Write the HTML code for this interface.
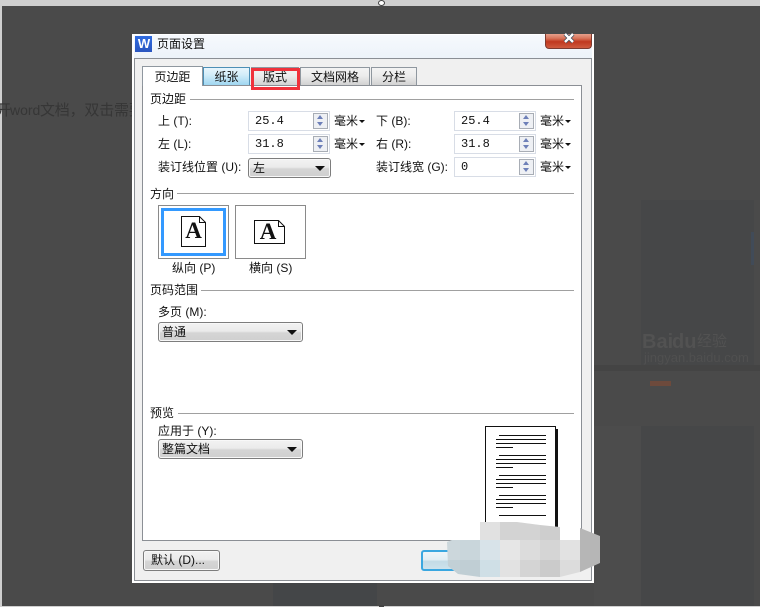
<!DOCTYPE html>
<html><head><meta charset="utf-8">
<style>
html,body{margin:0;padding:0}
body{width:760px;height:607px;overflow:hidden;position:relative;background:#4a4a4a;font-family:"Liberation Sans","WenQuanYi Zen Hei","Noto Sans CJK SC",sans-serif;font-size:12px;color:#111}
div,span{position:absolute;box-sizing:border-box}
.t{white-space:nowrap;line-height:14px;height:14px}
.line{height:1px;background:#a0a0a0}
.tab{top:67px;height:18px;border:1px solid #8f979f;border-bottom:0;text-align:center;line-height:19px;background:linear-gradient(#f4f4f4 0,#ececec 45%,#d2d2d2 100%)}
.in{background:#fff;border:1px solid #d8dde6;height:20px;width:82px;padding:2px 0 0 6px;line-height:15px;font-family:"Liberation Mono",monospace;font-size:12px}
.sp{width:15px;height:16px;right:1px;top:1px;background:#eef0f4;border:1px solid #a8adb5}
.sp:before{content:"";position:absolute;left:3px;top:1px;border:3.5px solid transparent;border-top:0;border-bottom:4px solid #6d7fb8}
.sp:after{content:"";position:absolute;left:3px;top:8px;border:3.5px solid transparent;border-bottom:0;border-top:4px solid #6d7fb8}
.sel{border:1px solid #7d7d7d;border-radius:3px;height:20px;background:linear-gradient(#f2f2f2 0,#ebebeb 45%,#d5d5d5 55%,#cfcfcf 100%);padding:2px 0 0 4px;line-height:15px;box-shadow:inset 0 0 0 1px #f8f8f8}
.arr:after{content:"";position:absolute;right:5px;top:7px;border:5px solid transparent;border-bottom:0;border-top:5px solid #111}
.dn{width:0;height:0;border:3px solid transparent;border-bottom:0;border-top:3px solid #111}
.box{background:#fff;border:1px solid #8a8a8a}
.pl{left:496px;height:1px;width:50px;background:#111}
</style></head>
<body>
<!-- page edges -->
<div style="left:0;top:0;width:760px;height:6px;background:#cfcfcf"></div>
<div style="left:0;top:0;width:2px;height:607px;background:#cfcfcf"></div>
<div style="left:0;top:606px;width:760px;height:1px;background:#d0d0d0"></div>
<div style="left:378px;top:0;width:7px;height:6px;border-radius:50%;background:#fff;border:1px solid #444"></div>
<div style="left:379px;top:605px;width:5px;height:2px;background:#444"></div>
<!-- background doc -->
<div style="left:273px;top:583px;width:104px;height:23px;background:#444648"></div>
<div style="left:641px;top:200px;width:113px;height:165px;background:#464748"></div>
<div style="left:641px;top:426px;width:113px;height:180px;background:#464748"></div>
<div style="left:594px;top:365px;width:166px;height:6px;background:#444"></div>
<div style="left:594px;top:426px;width:47px;height:180px;background:#4c4c4c"></div>
<div style="left:751px;top:232px;width:3px;height:33px;background:#414b58"></div>
<div style="left:642px;top:331px;font-size:20px;line-height:22px;font-weight:bold;color:#525252;white-space:nowrap">Bai</div>
<div style="left:672px;top:331px;font-size:20px;line-height:22px;font-weight:bold;color:#525252;white-space:nowrap">du</div>
<div style="left:697px;top:332px;font-size:15px;line-height:20px;color:#525252;white-space:nowrap">经验</div>
<div style="left:644px;top:350px;font-size:13px;line-height:15px;color:#505050;white-space:nowrap">jingyan.baidu.com</div>
<div style="left:650px;top:381px;width:21px;height:5px;background:#6d4a3c"></div>
<div class="t" style="left:-4px;top:102px;font-size:15px;line-height:17px;height:17px;color:#363636">开</div>
<div class="t" style="left:10px;top:102px;font-size:14px;line-height:17px;height:17px;color:#363636">word</div>
<div class="t" style="left:40px;top:102px;font-size:15px;line-height:17px;height:17px;color:#363636;letter-spacing:-.2px">文档，双击需要</div>
<!-- dialog -->
<div style="left:132px;top:34px;width:462px;height:549px;background:#fff"></div>
<div style="left:134px;top:35px;width:458px;height:23px;background:linear-gradient(#f6f9fd,#edf3fa)"></div>
<div style="left:135px;top:36px;width:17px;height:16px;background:linear-gradient(#2f6be0,#2a56c0)"></div>
<div style="left:137px;top:36px;width:14px;height:16px;color:#fff;font:bold 13px/16px 'Liberation Sans',sans-serif;text-align:center">W</div>
<div class="t" style="left:157px;top:37px">页面设置</div>
<!-- close -->
<div style="left:545px;top:34px;width:47px;height:15px;border:1px solid #7d3a30;border-top:0;border-radius:0 0 4px 4px;background:linear-gradient(#e6a08c 0,#d9765c 30%,#c0381f 55%,#cf5a3e 100%)"></div>
<svg style="position:absolute;left:563px;top:33px" width="12" height="11"><path d="M2 1 L10 9 M10 1 L2 9" stroke="#3c4a5a" stroke-width="4"/><path d="M2 1 L10 9 M10 1 L2 9" stroke="#fff" stroke-width="2.4"/></svg>
<!-- client -->
<div style="left:134px;top:58px;width:458px;height:523px;background:#f0f0f0;border:1px solid #8b8f95"></div>
<div style="left:142px;top:85px;width:440px;height:456px;background:#fff;border:1px solid #8b8f95"></div>
<!-- tabs -->
<div class="tab" style="left:203px;width:47px;border-color:#4d8fb5;background:linear-gradient(#e8f5fc 0,#d3edf9 40%,#9fd6f1 100%)">纸张</div>
<div class="tab" style="left:251px;width:48px">版式</div>
<div class="tab" style="left:300px;width:70px">文档网格</div>
<div class="tab" style="left:371px;width:46px">分栏</div>
<div class="tab" style="left:142px;top:66px;width:61px;height:20px;background:#fff;line-height:21px;z-index:2">页边距</div>
<div style="left:251px;top:68px;width:49px;height:22px;border:3px solid #f0313a;z-index:3"></div>
<!-- sections -->
<div class="t" style="left:150px;top:92px">页边距</div><div class="line" style="left:190px;top:99px;width:384px"></div>
<div class="t" style="left:150px;top:187px">方向</div><div class="line" style="left:177px;top:193px;width:397px"></div>
<div class="t" style="left:150px;top:283px">页码范围</div><div class="line" style="left:201px;top:290px;width:373px"></div>
<div class="t" style="left:150px;top:406px">预览</div><div class="line" style="left:178px;top:413px;width:396px"></div>
<!-- margins -->
<div class="t" style="left:158px;top:114px">上 (T):</div>
<div class="t" style="left:158px;top:137px">左 (L):</div>
<div class="t" style="left:158px;top:160px">装订线位置 (U):</div>
<div class="t" style="left:376px;top:114px">下 (B):</div>
<div class="t" style="left:376px;top:137px">右 (R):</div>
<div class="t" style="left:376px;top:160px">装订线宽 (G):</div>
<div class="in" style="left:248px;top:111px">25.4<div class="sp"></div></div>
<div class="in" style="left:248px;top:134px">31.8<div class="sp"></div></div>
<div class="sel arr" style="left:248px;top:158px;width:83px">左</div>
<div class="in" style="left:454px;top:111px">25.4<div class="sp"></div></div>
<div class="in" style="left:454px;top:134px">31.8<div class="sp"></div></div>
<div class="in" style="left:454px;top:157px">0<div class="sp"></div></div>
<div class="t" style="left:334px;top:114px">毫米</div><div class="dn" style="left:359px;top:120px"></div>
<div class="t" style="left:334px;top:137px">毫米</div><div class="dn" style="left:359px;top:143px"></div>
<div class="t" style="left:540px;top:114px">毫米</div><div class="dn" style="left:565px;top:120px"></div>
<div class="t" style="left:540px;top:137px">毫米</div><div class="dn" style="left:565px;top:143px"></div>
<div class="t" style="left:540px;top:160px">毫米</div><div class="dn" style="left:565px;top:166px"></div>
<!-- orientation -->
<div class="box" style="left:158px;top:205px;width:71px;height:54px"></div>
<div style="left:161px;top:208px;width:65px;height:48px;border:3px solid #3399ff"></div>
<div class="box" style="left:235px;top:205px;width:71px;height:54px"></div>
<svg style="position:absolute;left:180px;top:215px" width="28" height="33"><path d="M1.500 1.500H19.500L25.500 7.500V31.500H1.500Z M19.500 1.500V7.500H25.500" fill="#fff" stroke="#111"/><text x="13.500" y="23" font-family="Liberation Serif,serif" font-size="23" font-weight="bold" text-anchor="middle" fill="#111">A</text></svg>
<svg style="position:absolute;left:253px;top:219px" width="34" height="27"><path d="M1.500 1.500H25.500L31.500 7.500V24.500H1.500Z M25.500 1.500V7.500H31.500" fill="#fff" stroke="#111"/><text x="15" y="20" font-family="Liberation Serif,serif" font-size="23" font-weight="bold" text-anchor="middle" fill="#111">A</text></svg>
<div class="t" style="left:172px;top:261px">纵向 (P)</div>
<div class="t" style="left:249px;top:261px">横向 (S)</div>
<!-- page range -->
<div class="t" style="left:158px;top:305px">多页 (M):</div>
<div class="sel arr" style="left:158px;top:322px;width:145px;padding-left:3px">普通</div>
<!-- preview -->
<div class="t" style="left:158px;top:424px">应用于 (Y):</div>
<div class="sel arr" style="left:158px;top:439px;width:145px;padding-left:3px">整篇文档</div>
<div style="left:485px;top:426px;width:71px;height:110px;background:#fff;border:1px solid #111"></div>
<div style="left:556px;top:429px;width:2px;height:107px;background:#111"></div>
<div class="pl" style="left:499px;top:435px;width:47px"></div><div class="pl" style="top:439px"></div><div class="pl" style="top:443px"></div><div class="pl" style="top:447px;width:17px"></div>
<div class="pl" style="left:499px;top:455px;width:47px"></div><div class="pl" style="top:459px"></div><div class="pl" style="top:463px"></div><div class="pl" style="top:467px;width:17px"></div>
<div class="pl" style="left:499px;top:475px;width:47px"></div><div class="pl" style="top:479px"></div><div class="pl" style="top:483px"></div><div class="pl" style="top:487px;width:17px"></div>
<div class="pl" style="left:499px;top:495px;width:47px"></div><div class="pl" style="top:499px"></div><div class="pl" style="top:503px"></div><div class="pl" style="top:507px;width:17px"></div>
<div class="pl" style="left:499px;top:515px;width:47px"></div>
<!-- buttons -->
<div class="sel" style="left:143px;top:550px;width:77px;height:21px;padding:2px 0 0 7px">默认 (D)...</div>
<div style="left:421px;top:550px;width:60px;height:21px;border:2px solid #3aa7e0;border-radius:3px;background:linear-gradient(#eef5f9 0,#e2eef4 45%,#c3dbe6 55%,#cde2ec 100%)"></div>
<!-- mosaic blur -->
<svg style="position:absolute;left:447px;top:522px" width="154" height="56" viewBox="447 522 154 56">
<defs><clipPath id="c"><path d="M480 522H517L540 525L560 527V540H580V528L600 536V563L580 572L560 577H480L458 574L448 566L447 542L452 540H480Z"/></clipPath></defs>
<g clip-path="url(#c)" shape-rendering="crispEdges">
<rect x="480" y="522" width="20" height="18" fill="#e1e1e1"/><rect x="500" y="522" width="40" height="18" fill="#d3d3d3"/><rect x="540" y="522" width="20" height="18" fill="#cecece"/>
<rect x="447" y="540" width="13" height="20" fill="#ccd7dc"/><rect x="460" y="540" width="20" height="20" fill="#c9d6db"/><rect x="480" y="540" width="20" height="20" fill="#d8e3e9"/><rect x="500" y="540" width="20" height="20" fill="#e6e6e6"/><rect x="520" y="540" width="20" height="20" fill="#dcdcdc"/><rect x="540" y="540" width="20" height="20" fill="#d5d5d5"/><rect x="560" y="540" width="20" height="20" fill="#e2e2e2"/><rect x="580" y="525" width="20" height="52" fill="#b6b6b6"/>
<rect x="447" y="560" width="13" height="18" fill="#c2d0d6"/><rect x="460" y="560" width="20" height="18" fill="#c0ced4"/><rect x="480" y="560" width="20" height="18" fill="#cfdfe6"/><rect x="500" y="560" width="20" height="18" fill="#e2e2e2"/><rect x="520" y="560" width="20" height="18" fill="#d4d4d4"/><rect x="540" y="560" width="20" height="18" fill="#cbcbcb"/><rect x="560" y="560" width="20" height="18" fill="#dcdcdc"/>
</g></svg>
</body></html>
